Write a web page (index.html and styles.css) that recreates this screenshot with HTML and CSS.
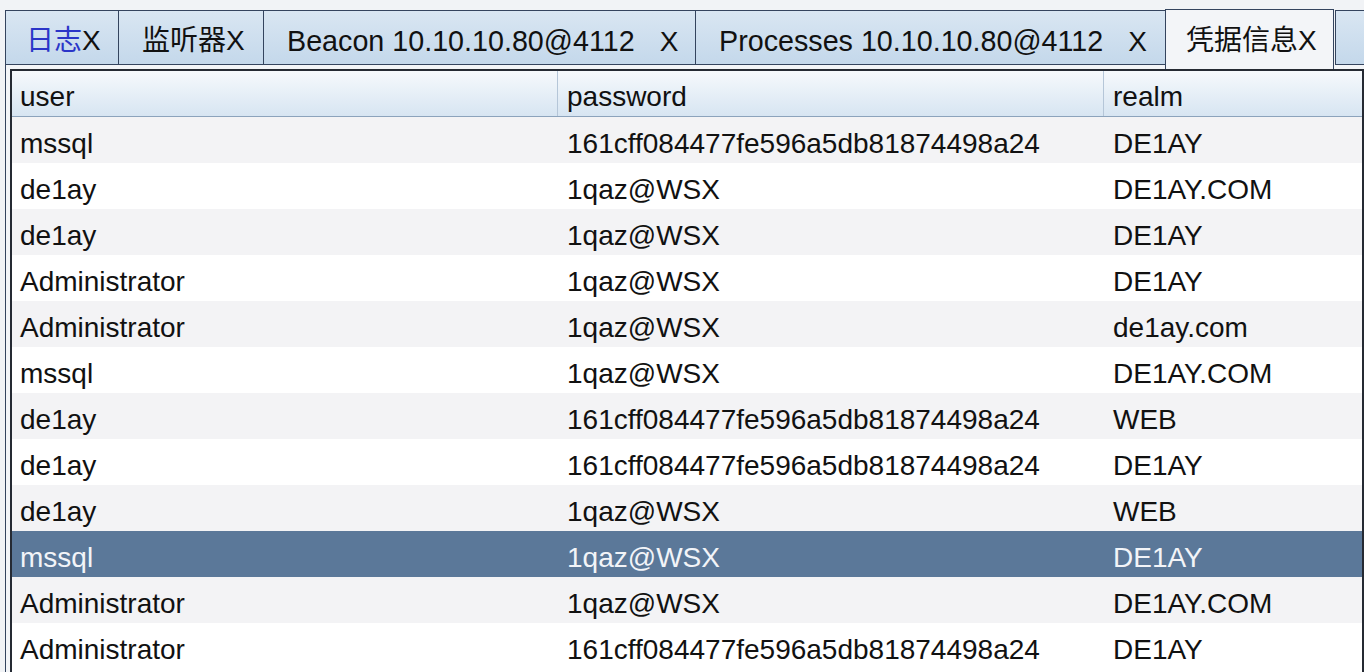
FILE: index.html
```html
<!DOCTYPE html>
<html>
<head>
<meta charset="utf-8">
<link rel="stylesheet" href="styles.css">
</head>
<body>
<div class="app">
  <div class="tabs">
    <div class="tab t1"><span class="blue">日志</span>X</div>
    <div class="tab t2">监听器X</div>
    <div class="tab t3"><span class="lat">Beacon 10.10.10.80@4112</span><span class="x">X</span></div>
    <div class="tab t4"><span class="lat">Processes 10.10.10.80@4112</span><span class="x">X</span></div>
    <div class="tab t5 active">凭据信息X</div>
    <div class="tab t6"></div>
  </div>
  <div class="panel">
    <div class="pane">
      <div class="row head">
        <div class="cell">user</div>
        <div class="cell sep">password</div>
        <div class="cell sep">realm</div>
      </div>
      <div class="row odd"><div class="cell">mssql</div><div class="cell">161cff084477fe596a5db81874498a24</div><div class="cell">DE1AY</div></div>
      <div class="row"><div class="cell">de1ay</div><div class="cell">1qaz@WSX</div><div class="cell">DE1AY.COM</div></div>
      <div class="row odd"><div class="cell">de1ay</div><div class="cell">1qaz@WSX</div><div class="cell">DE1AY</div></div>
      <div class="row"><div class="cell">Administrator</div><div class="cell">1qaz@WSX</div><div class="cell">DE1AY</div></div>
      <div class="row odd"><div class="cell">Administrator</div><div class="cell">1qaz@WSX</div><div class="cell">de1ay.com</div></div>
      <div class="row"><div class="cell">mssql</div><div class="cell">1qaz@WSX</div><div class="cell">DE1AY.COM</div></div>
      <div class="row odd"><div class="cell">de1ay</div><div class="cell">161cff084477fe596a5db81874498a24</div><div class="cell">WEB</div></div>
      <div class="row"><div class="cell">de1ay</div><div class="cell">161cff084477fe596a5db81874498a24</div><div class="cell">DE1AY</div></div>
      <div class="row odd"><div class="cell">de1ay</div><div class="cell">1qaz@WSX</div><div class="cell">WEB</div></div>
      <div class="row selected"><div class="cell">mssql</div><div class="cell">1qaz@WSX</div><div class="cell">DE1AY</div></div>
      <div class="row odd"><div class="cell">Administrator</div><div class="cell">1qaz@WSX</div><div class="cell">DE1AY.COM</div></div>
      <div class="row"><div class="cell">Administrator</div><div class="cell">161cff084477fe596a5db81874498a24</div><div class="cell">DE1AY</div></div>
    </div>
  </div>
</div>
</body>
</html>
```

FILE: styles.css
```css
html, body {
  margin: 0;
  padding: 0;
  background: #f1f3f6;
  overflow: hidden;
}
body {
  font-family: "Liberation Sans", Arial, "Noto Sans CJK SC", sans-serif;
  font-size: 28px;
  color: #111;
}
.app {
  width: 1364px;
  height: 672px;
  overflow: hidden;
}
.tabs {
  display: flex;
  align-items: flex-start;
  padding: 10px 0 0 5px;
  height: 55px;
  box-sizing: content-box;
}
.tab {
  box-sizing: border-box;
  height: 55px;
  border: 1px solid #34445e;
  border-right: none;
  background: linear-gradient(#d9e6f2, #c4d8eb);
  white-space: nowrap;
  padding: 14px 0 0 0;
  line-height: 32px;
  flex: none;
}
.blue { color: #2b35c8; }
.lat { font-size: 28.7px; }
.t1 { width: 113px; padding-left: 20px; }
.t2 { width: 145px; padding-left: 23px; }
.t3 { width: 432px; padding-left: 23px; }
.t4 { width: 470px; padding-left: 23px; }
.t5 { width: 169px; padding-left: 20px; }
.t6 { width: 40px; border-right: none; }
.x { margin-left: 25px; }
.tab.active {
  background: #f3f5f8;
  border-bottom: none;
  border-right: 1px solid #34445e;
  margin-top: -1px;
  height: 60px;
  padding-top: 15px;
  position: relative;
  z-index: 1;
}
.tab.active + .tab {
  margin-left: 1px;
  border-left: 1px solid #34445e;
}
.panel {
  margin-left: 5px;
  border-left: 1px solid #34445e;
  background: #f3f5f8;
  padding: 4px 0 0 4px;
  height: 620px;
}
.pane {
  width: 1354px;
  box-sizing: border-box;
  border: 2px solid #252a33;
  border-bottom: none;
  background: #fff;
  height: 620px;
}
.row {
  display: grid;
  grid-template-columns: 545px 546px 1fr;
  height: 46px;
  line-height: 46px;
  white-space: nowrap;
}
.row.odd { background: #f3f3f5; }
.row.selected { background: #5b7899; color: #f2f4f8; }
.cell {
  padding-left: 8px;
  padding-top: 4px;
  box-sizing: border-box;
  overflow: hidden;
}
.row .cell:nth-child(2), .row .cell:nth-child(3) { padding-left: 10px; }
.row.head {
  height: 46px;
  background: linear-gradient(#f6f9fc, #d7e5f2);
  border-bottom: 1px solid #8ca3bc;
  box-sizing: border-box;
  line-height: 44px;
}
.row.head .cell { padding-top: 4px; }
.row.head .cell.sep {
  border-left: 1px solid #b5c6d8;
  padding-left: 9px;
}
```
